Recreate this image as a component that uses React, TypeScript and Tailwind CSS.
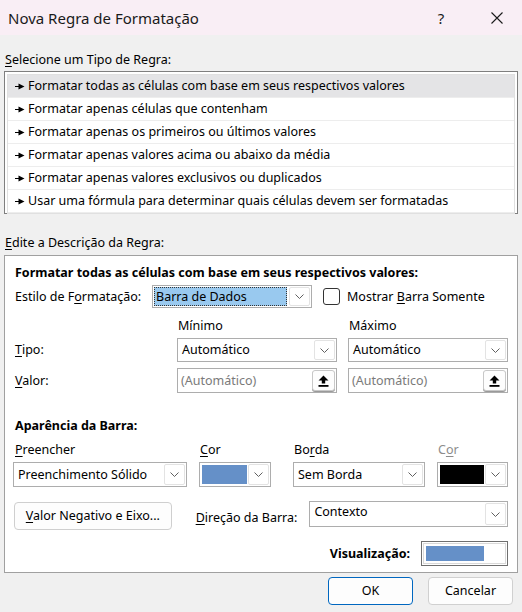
import React from "react";

const FONT = { fontFamily: '"Noto Sans", "Segoe UI", Arial, sans-serif' };

function Chevron() {
  return (
    <svg width="9" height="5" viewBox="0 0 9 5" className="block">
      <path d="M0.5 0.5 L4.5 4.5 L8.5 0.5" fill="none" stroke="#606060" strokeWidth="1" />
    </svg>
  );
}

function ChevBox({ h = 19 }: { h?: number }) {
  return (
    <div
      className="w-[21px] shrink-0 flex items-center justify-center border border-[#e3e3e3] rounded-[2px] bg-white mr-[1px]"
      style={{ height: h }}
    >
      <Chevron />
    </div>
  );
}

function Select({ w, text, h = 24 }: { w: number; text: string; h?: number }) {
  return (
    <div
      className="flex items-center border border-[#adadad] bg-white pl-[4px] shrink-0"
      style={{ width: w, height: h }}
    >
      <span className="flex-1 text-[12.5px] text-black leading-[16px] whitespace-nowrap">{text}</span>
      <ChevBox h={h - 4} />
    </div>
  );
}

function UploadIcon() {
  return (
    <svg width="11" height="12" viewBox="0 0 11 12" className="block">
      <path d="M5.5 0.5 L10.5 5.5 L7.2 5.5 L7.2 8.5 L3.8 8.5 L3.8 5.5 L0.5 5.5 Z" fill="#000" />
      <rect x="0.5" y="10" width="10" height="1.8" fill="#000" />
    </svg>
  );
}

function ValueInput({ w }: { w: number }) {
  return (
    <div className="flex items-center border border-[#adadad] bg-white pl-[3px] h-[25px] shrink-0" style={{ width: w }}>
      <span className="flex-1 text-[12.5px] text-[#7a7a7a] leading-[16px] whitespace-nowrap">(Automático)</span>
      <div className="w-[23px] h-[21px] mr-[1px] flex items-center justify-center border border-[#c8c8c8] rounded-[3px] bg-[#fdfdfd] shadow-[0_1px_0_#9a9a9a]">
        <UploadIcon />
      </div>
    </div>
  );
}

function ColorPick({ color, w }: { color: string; w: number }) {
  return (
    <div className="flex items-center border border-[#adadad] bg-white h-[25px] shrink-0 pl-[2px]" style={{ width: w }}>
      <div className="h-[19px] flex-1 mr-[1px]" style={{ background: color }} />
      <ChevBox h={21} />
    </div>
  );
}

function Arrow() {
  return (
    <svg width="10" height="7" viewBox="0 0 10 7" className="block shrink-0">
      <rect x="0" y="3" width="4" height="1" fill="#000" />
      <path d="M3.5 0.5 L9.5 3.5 L3.5 6.5 Z" fill="#000" />
    </svg>
  );
}

const items = [
  "Formatar todas as células com base em seus respectivos valores",
  "Formatar apenas células que contenham",
  "Formatar apenas os primeiros ou últimos valores",
  "Formatar apenas valores acima ou abaixo da média",
  "Formatar apenas valores exclusivos ou duplicados",
  "Usar uma fórmula para determinar quais células devem ser formatadas",
];

export default function App() {
  return (
    <div className="w-[522px] h-[612px] bg-[#f0f0f0] text-black overflow-hidden" style={FONT}>
      {/* title bar */}
      <div className="h-[35px] bg-[#f9eef5] flex items-center pl-[8px]">
        <span className="flex-1 text-[15px] leading-[20px] text-[#1a1a1a]">Nova Regra de Formatação</span>
        <span className="text-[15px] leading-[20px] w-[20px] text-center mr-[40px] text-[#1a1a1a]">?</span>
        <svg width="12" height="12" viewBox="0 0 12 12" className="mr-[19px]">
          <path d="M0.5 0.5 L11.5 11.5 M11.5 0.5 L0.5 11.5" stroke="#1a1a1a" strokeWidth="1.1" />
        </svg>
      </div>

      <div className="px-[4px]">
        <div className="h-[16px] mt-[17px] pl-[1px] text-[12.5px] leading-[16px]">
          <span className="underline underline-offset-2">S</span>elecione um Tipo de Regra:
        </div>

        {/* list */}
        <div className="mt-[3px] h-[143px] border border-[#7f7f7f] bg-white p-[2px] flex flex-col">
          <div className="border border-[#e0e0e0] flex-1 flex flex-col">
            {items.map((t, i) => (
              <div
                key={i}
                className={
                  "h-[23px] flex items-center gap-[3px] pl-[7px] border-b border-[#ededed] " +
                  (i === 0 ? "bg-[#e4e4e6]" : "bg-white")
                }
              >
                <Arrow />
                <span className="text-[12.5px] leading-[16px] whitespace-nowrap">{t}</span>
              </div>
            ))}
          </div>
        </div>

        <div className="h-[16px] mt-[21px] pl-[1px] text-[12.5px] leading-[16px]">
          <span className="underline underline-offset-2">E</span>dite a Descrição da Regra:
        </div>

        {/* panel */}
        <div className="mt-[4px] h-[318px] border border-[#a0a0a0] bg-white pl-[10px] pr-[9px] flex flex-col">
          <div className="mt-[9px] h-[16px] text-[12.5px] font-bold leading-[16px] whitespace-nowrap">
            Formatar todas as células com base em seus respectivos valores:
          </div>

          <div className="mt-[4px] h-[23px] flex items-center">
            <span className="w-[137px] text-[12.5px] leading-[16px]">
              Estilo de F<span className="underline underline-offset-2">o</span>rmatação:
            </span>
            <div className="flex items-center border border-[#adadad] bg-white w-[160px] h-[23px] pl-[1px]">
              <div className="flex-1 h-[19px] bg-[#99c9ef] border border-dotted border-[#333] flex items-center pl-[1px] mr-[2px]">
                <span className="text-[12.5px] leading-[16px]">Barra de Dados</span>
              </div>
              <ChevBox h={19} />
            </div>
            <div className="ml-[11px] w-[17px] h-[17px] border border-[#333] rounded-[3px] bg-white" />
            <span className="ml-[7px] text-[12.5px] leading-[16px]">
              Mostrar <span className="underline underline-offset-2">B</span>arra Somente
            </span>
          </div>

          <div className="mt-[10px] h-[16px] flex text-[12.5px] leading-[16px]">
            <span className="w-[163px]" />
            <span className="w-[171px]">Mínimo</span>
            <span>Máximo</span>
          </div>

          <div className="mt-[4px] h-[24px] flex items-center">
            <span className="w-[162px] text-[12.5px] leading-[16px]">
              <span className="underline underline-offset-2">T</span>ipo:
            </span>
            <Select w={160} text="Automático" h={24} />
            <div className="w-[11px]" />
            <Select w={160} text="Automático" h={24} />
          </div>

          <div className="mt-[6px] h-[25px] flex items-center">
            <span className="w-[162px] text-[12.5px] leading-[16px]">
              <span className="underline underline-offset-2">V</span>alor:
            </span>
            <ValueInput w={160} />
            <div className="w-[11px]" />
            <ValueInput w={160} />
          </div>

          <div className="mt-[25px] h-[16px] text-[12.5px] font-bold leading-[16px]">Aparência da Barra:</div>

          <div className="mt-[8px] h-[16px] flex text-[12.5px] leading-[16px]">
            <span className="w-[185px]">
              <span className="underline underline-offset-2">P</span>reencher
            </span>
            <span className="w-[94px]">
              <span className="underline underline-offset-2">C</span>or
            </span>
            <span className="w-[144px]">
              Bo<span className="underline underline-offset-2">r</span>da
            </span>
            <span className="text-[#8c8c8c]">
              C<span className="underline underline-offset-2">o</span>r
            </span>
          </div>

          <div className="mt-[4px] h-[25px] flex items-center -ml-[2px]">
            <Select w={174} text="Preenchimento Sólido" h={25} />
            <div className="w-[12px]" />
            <ColorPick color="#6590c8" w={72} />
            <div className="w-[22px]" />
            <Select w={132} text="Sem Borda" h={25} />
            <div className="w-[12px]" />
            <ColorPick color="#000000" w={71} />
          </div>

          <div className="mt-[15px] h-[28px] flex items-center -ml-[2px]">
            <div className="ml-[1px] w-[158px] h-[28px] border border-[#cfcfcf] rounded-[4px] bg-[#fdfdfd] flex items-center justify-center text-[12.5px] leading-[16px]">
              <span>
                <span className="underline underline-offset-2">V</span>alor Negativo e Eixo...
              </span>
            </div>
            <span className="ml-[24px] w-[114px] text-[12.5px] leading-[16px] pt-[3px]">
              <span className="underline underline-offset-2">D</span>ireção da Barra:
            </span>
            <div className="flex items-center border border-[#adadad] bg-white h-[26px] w-[199px] pl-[4px] self-start -mt-[1px]">
              <span className="flex-1 text-[12.5px] leading-[16px] -mt-[4px]">Contexto</span>
              <ChevBox h={22} />
            </div>
          </div>

          <div className="mt-[11px] h-[25px] flex items-center justify-end">
            <span className="text-[12.5px] font-bold leading-[16px] mr-[11px]">Visualização:</span>
            <div className="w-[87px] h-[25px] border border-[#6f6f6f] p-[1px] bg-white">
              <div className="w-full h-full border border-[#d9d9d9] px-[2px] py-[2px]">
                <div className="w-[58px] h-full bg-[#6590c8]" />
              </div>
            </div>
          </div>
        </div>

        {/* buttons */}
        <div className="mt-[4px] flex justify-end gap-[15px] pr-[5px]">
          <div className="w-[85px] h-[28px] border border-[#0067c0] rounded-[4px] bg-[#fdfdfd] flex items-center justify-center text-[12.5px] leading-[16px]">
            OK
          </div>
          <div className="w-[85px] h-[28px] border border-[#d0d0d0] rounded-[4px] bg-[#fdfdfd] flex items-center justify-center text-[12.5px] leading-[16px]">
            Cancelar
          </div>
        </div>
      </div>
    </div>
  );
}
